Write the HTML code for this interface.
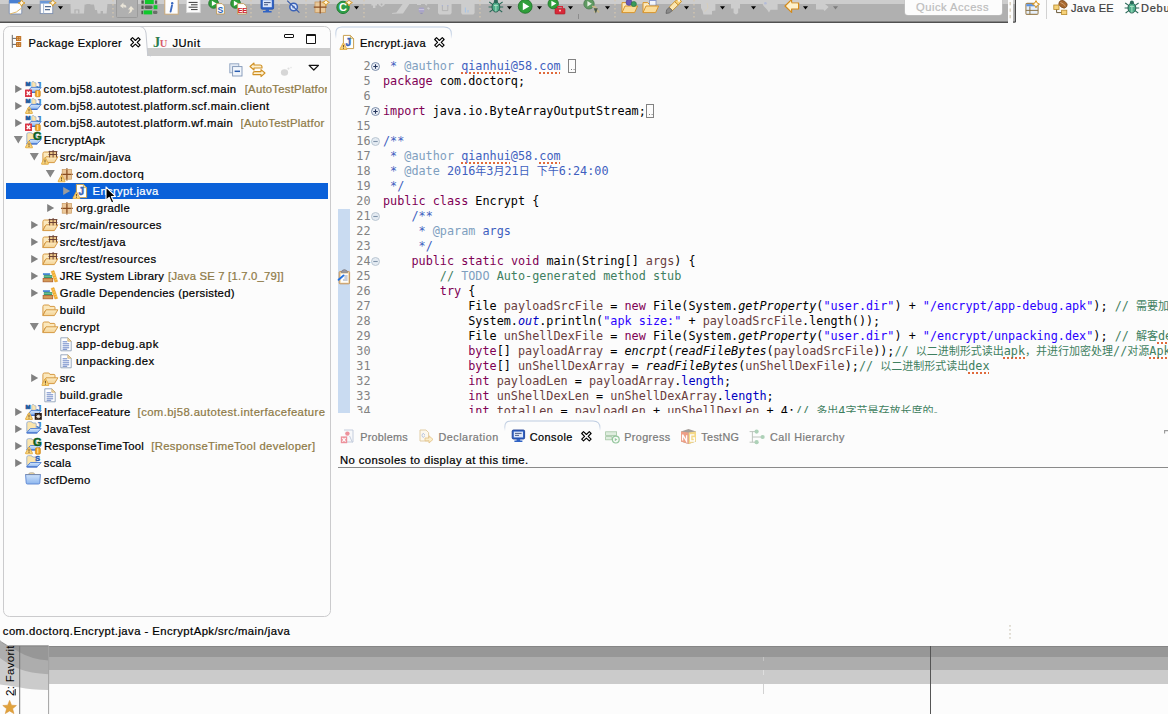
<!DOCTYPE html>
<html><head><meta charset="utf-8"><title>Eclipse</title>
<style>
*{box-sizing:border-box;margin:0;padding:0}
html,body{width:1168px;height:714px;overflow:hidden;background:#fcfcfc}
body{position:relative;font-family:"Liberation Sans","Noto Sans CJK SC",sans-serif;font-size:12.2px;color:#000}
.abs{position:absolute}
svg{position:absolute;overflow:visible}
#toolbar{left:0;top:0;width:1007.8px;height:21px;background:#b0b0b0;border-top:4px solid #cdcdcd}
#tbline{left:0;top:20.8px;width:1007.8px;height:2.2px;background:linear-gradient(#9c9c9c,#6e6e6e 45%,#505050 60%,#505050)}
#left{left:3px;top:26px;width:328.1px;height:591px;border:1.1px solid #cbcbcd;border-radius:6.5px;background:#fcfcfc}
#ltabgray{left:147px;top:48px;width:183px;height:8px;background:#cccccc}
.code{position:absolute;left:49px;white-space:pre;font-family:"DejaVu Sans Mono","Liberation Mono","Noto Sans CJK SC",monospace;font-size:11.8px;line-height:15px;height:15px}
.ln{position:absolute;width:33px;text-align:right;left:3.5px;font-family:"DejaVu Sans Mono","Liberation Mono",monospace;font-size:11.8px;line-height:15px;height:15px;color:#828282}
.kw{color:#7f0055}.cm{color:#3f7f5f}.jd{color:#3f5fbf}.tag{color:#7f9fbf}.st{color:#2a00ff}.fld{color:#0000c0}.it{font-style:italic}.lv{color:#6a3e3e}.todo{color:#7f9fbf}
.sq{text-decoration:underline;text-decoration-style:dotted;text-decoration-color:#e06a3c;text-decoration-thickness:1.5px;text-underline-offset:2px}
.tab{position:absolute;font-size:12px;white-space:nowrap;line-height:16px;-webkit-text-stroke:0.22px currentColor}
.cj{font-size:11px}
.box{display:inline-block;position:relative;width:8px;height:14px;border:1.1px solid #828282;vertical-align:-3.4px;margin-left:0.6px}
.box:after{content:'';position:absolute;left:1.3px;bottom:2.2px;width:1.1px;height:1.1px;background:#777;box-shadow:2.6px 0 0 #777}
</style></head><body>
<div id="toolbar" class="abs"></div><div id="tbline" class="abs"></div>
<div id="left" class="abs"></div><div id="ltabgray" class="abs"></div>
<svg style="left:15px;top:85px" width="8" height="8"><path d="M0.2 -0.1 L7.2 3.9 L0.2 7.9 Z" fill="#808080"/></svg>
<svg style="left:25px;top:81px" width="16" height="16" viewBox="0 0 16 16"><defs><linearGradient id="bf" x1="0" y1="0" x2="0" y2="1"><stop offset="0" stop-color="#d6e6fb"/><stop offset="1" stop-color="#8fb8f0"/></linearGradient></defs><path d="M6.8 7 L6.8 1.4 Q6.8 0.6 7.6 0.6 L8.8 0.6 L9.6 1.8 L11 1.8 L11 7 Z" fill="#fbe5ac" stroke="#9aaecc" stroke-width="0.7" stroke-linejoin="round"/><path d="M2.6 11.2 L6 6.4 L16.2 6.4 L12.4 11.2 Z" fill="url(#bf)" stroke="#4f7fd2" stroke-width="0.9" stroke-linejoin="round"/><path d="M2.8 11.4 L12.4 11.4" stroke="#3f6cc8" stroke-width="1.1"/><text x="0.6" y="4.9" font-family="Liberation Sans,sans-serif" font-size="6" font-weight="bold" fill="#1d5b9e" stroke="#1d5b9e" stroke-width="0.6">M</text><text x="11" y="7.2" font-family="Liberation Sans,sans-serif" font-size="9.6" font-weight="bold" fill="#3d7fc2" stroke="#3d7fc2" stroke-width="0.2">J</text><g transform="translate(0 8.4)"><rect x="0" y="0" width="7" height="7.6" rx="0.6" fill="#d93545"/><path d="M1.8 2 L5.2 5.6 M5.2 2 L1.8 5.6" stroke="#fff" stroke-width="1.5" fill="none"/></g><g transform="translate(10.3 8.8)"><rect x="0" y="0.6" width="5" height="6.4" rx="1.2" fill="#f3a21f" stroke="#c47c12" stroke-width="0.6"/><rect x="1.6" y="1.2" width="1.4" height="5" fill="#fbd58a"/></g></svg>
<div class="tab" style="left:43.60px;top:80.77px;font-size:11.3px;letter-spacing:0.419px;color:#000;">com.bj58.autotest.platform.scf.main</div>
<div class="abs" style="left:244.7px;top:81px;width:82.80000000000001px;height:17px;overflow:hidden"><div class="tab" style="left:0.00px;top:-0.23px;font-size:11.3px;letter-spacing:0.259px;color:#8e7a47;">[AutoTestPlatfor</div></div>
<svg style="left:15px;top:102px" width="8" height="8"><path d="M0.2 -0.1 L7.2 3.9 L0.2 7.9 Z" fill="#808080"/></svg>
<svg style="left:25px;top:98px" width="16" height="16" viewBox="0 0 16 16"><defs><linearGradient id="bf" x1="0" y1="0" x2="0" y2="1"><stop offset="0" stop-color="#d6e6fb"/><stop offset="1" stop-color="#8fb8f0"/></linearGradient></defs><path d="M6.8 7 L6.8 1.4 Q6.8 0.6 7.6 0.6 L8.8 0.6 L9.6 1.8 L11 1.8 L11 7 Z" fill="#fbe5ac" stroke="#9aaecc" stroke-width="0.7" stroke-linejoin="round"/><path d="M2.6 11.2 L6 6.4 L16.2 6.4 L12.4 11.2 Z" fill="url(#bf)" stroke="#4f7fd2" stroke-width="0.9" stroke-linejoin="round"/><path d="M2.8 11.4 L12.4 11.4" stroke="#3f6cc8" stroke-width="1.1"/><text x="0.6" y="4.9" font-family="Liberation Sans,sans-serif" font-size="6" font-weight="bold" fill="#1d5b9e" stroke="#1d5b9e" stroke-width="0.6">M</text><text x="11" y="7.2" font-family="Liberation Sans,sans-serif" font-size="9.6" font-weight="bold" fill="#3d7fc2" stroke="#3d7fc2" stroke-width="0.2">J</text><g transform="translate(0 8.2) scale(1.0)"><path d="M4 1.3 L6.9 6.7 L1.1 6.7 Z" fill="#f7d47c" stroke="#e2ac48" stroke-width="2" stroke-linejoin="round"/><path d="M4 1.3 L6.9 6.7 L1.1 6.7 Z" fill="#f8d884" stroke="#f3c968" stroke-width="0.6" stroke-linejoin="round"/><rect x="3.55" y="2.6" width="0.9" height="2.4" fill="#6a4420"/><rect x="3.55" y="5.5" width="0.9" height="0.9" fill="#6a4420"/></g></svg>
<div class="tab" style="left:43.60px;top:97.77px;font-size:11.3px;letter-spacing:0.430px;color:#000;">com.bj58.autotest.platform.scf.main.client</div>
<svg style="left:15px;top:119px" width="8" height="8"><path d="M0.2 -0.1 L7.2 3.9 L0.2 7.9 Z" fill="#808080"/></svg>
<svg style="left:25px;top:115px" width="16" height="16" viewBox="0 0 16 16"><defs><linearGradient id="bf" x1="0" y1="0" x2="0" y2="1"><stop offset="0" stop-color="#d6e6fb"/><stop offset="1" stop-color="#8fb8f0"/></linearGradient></defs><path d="M6.8 7 L6.8 1.4 Q6.8 0.6 7.6 0.6 L8.8 0.6 L9.6 1.8 L11 1.8 L11 7 Z" fill="#fbe5ac" stroke="#9aaecc" stroke-width="0.7" stroke-linejoin="round"/><path d="M2.6 11.2 L6 6.4 L16.2 6.4 L12.4 11.2 Z" fill="url(#bf)" stroke="#4f7fd2" stroke-width="0.9" stroke-linejoin="round"/><path d="M2.8 11.4 L12.4 11.4" stroke="#3f6cc8" stroke-width="1.1"/><text x="0.6" y="4.9" font-family="Liberation Sans,sans-serif" font-size="6" font-weight="bold" fill="#1d5b9e" stroke="#1d5b9e" stroke-width="0.6">M</text><text x="11" y="7.2" font-family="Liberation Sans,sans-serif" font-size="9.6" font-weight="bold" fill="#3d7fc2" stroke="#3d7fc2" stroke-width="0.2">J</text><g transform="translate(0 8.4)"><rect x="0" y="0" width="7" height="7.6" rx="0.6" fill="#d93545"/><path d="M1.8 2 L5.2 5.6 M5.2 2 L1.8 5.6" stroke="#fff" stroke-width="1.5" fill="none"/></g><g transform="translate(10.3 8.8)"><rect x="0" y="0.6" width="5" height="6.4" rx="1.2" fill="#f3a21f" stroke="#c47c12" stroke-width="0.6"/><rect x="1.6" y="1.2" width="1.4" height="5" fill="#fbd58a"/></g></svg>
<div class="tab" style="left:43.60px;top:114.77px;font-size:11.3px;letter-spacing:0.426px;color:#000;">com.bj58.autotest.platform.wf.main</div>
<div class="abs" style="left:240.6px;top:115px;width:86.9px;height:17px;overflow:hidden"><div class="tab" style="left:0.00px;top:-0.23px;font-size:11.3px;letter-spacing:0.259px;color:#8e7a47;">[AutoTestPlatfor</div></div>
<svg style="left:14px;top:136px" width="9" height="8"><path d="M-0.2 0 L8.8 0 L4.3 7.4 Z" fill="#868686"/></svg>
<svg style="left:25px;top:132px" width="16" height="16" viewBox="0 0 16 16"><defs><linearGradient id="bf" x1="0" y1="0" x2="0" y2="1"><stop offset="0" stop-color="#d6e6fb"/><stop offset="1" stop-color="#8fb8f0"/></linearGradient></defs><path d="M1.8 10.6 L1.8 2.2 Q1.8 0.7 3.4 0.7 L5.8 0.7 Q7.2 0.7 7.8 2 L10.4 2 Q11.2 2 11.2 3 L11.2 8 L5 8.4 Z" fill="#fbe5ac" stroke="#8ca6cc" stroke-width="0.8" stroke-linejoin="round"/><path d="M1.6 11.8 L5.4 7.5 L16.2 7.5 L12.2 11.8 Z" fill="url(#bf)" stroke="#4f7fd2" stroke-width="0.9" stroke-linejoin="round"/><path d="M1.8 12 L12.2 12" stroke="#3f6cc8" stroke-width="1.1"/><text x="8" y="8.3" font-family="Liberation Sans,sans-serif" font-size="11.4" font-weight="bold" fill="#0b5f1e" stroke="#0b5f1e" stroke-width="0.45">G</text><g transform="translate(0 8.6) scale(1.0)"><path d="M4 1.3 L6.9 6.7 L1.1 6.7 Z" fill="#f7d47c" stroke="#e2ac48" stroke-width="2" stroke-linejoin="round"/><path d="M4 1.3 L6.9 6.7 L1.1 6.7 Z" fill="#f8d884" stroke="#f3c968" stroke-width="0.6" stroke-linejoin="round"/><rect x="3.55" y="2.6" width="0.9" height="2.4" fill="#6a4420"/><rect x="3.55" y="5.5" width="0.9" height="0.9" fill="#6a4420"/></g></svg>
<div class="tab" style="left:43.80px;top:131.77px;font-size:11.3px;letter-spacing:0.380px;color:#000;">EncryptApk</div>
<svg style="left:30px;top:153px" width="9" height="8"><path d="M-0.2 0 L8.8 0 L4.3 7.4 Z" fill="#868686"/></svg>
<svg style="left:41px;top:149px" width="16" height="16" viewBox="0 0 16 16"><defs><linearGradient id="yf" x1="0" y1="0" x2="0" y2="1"><stop offset="0" stop-color="#fcecc4"/><stop offset="1" stop-color="#f3d294"/></linearGradient></defs><path d="M1.9 13.4 L1.9 4.6 Q1.9 3 3.4 3 L7.4 3 Q8.5 3 8.9 4.4 L13 4.4 Q14 4.4 14 5.6 L14 8.4 L4 9 Z" fill="#fbe8bd" stroke="#d69a44" stroke-width="1" stroke-linejoin="round"/><path d="M1.9 13.6 L5 7.8 L16.9 7.8 L13.4 13.6 Z" fill="url(#yf)" stroke="#d69a44" stroke-width="1" stroke-linejoin="round"/><rect x="8.6" y="2.6" width="7" height="5.8" fill="#f1cd8c"/><path d="M7.6 2.6 H16.4 M7.6 5.5 H16.4 M8.6 1.8 V8.4 M12.1 1 V8.4 M15.5 2.6 V8.4" stroke="#6e4434" stroke-width="1" fill="none"/><g transform="translate(0 8) scale(1.0)"><path d="M4 1.3 L6.9 6.7 L1.1 6.7 Z" fill="#f7d47c" stroke="#e2ac48" stroke-width="2" stroke-linejoin="round"/><path d="M4 1.3 L6.9 6.7 L1.1 6.7 Z" fill="#f8d884" stroke="#f3c968" stroke-width="0.6" stroke-linejoin="round"/><rect x="3.55" y="2.6" width="0.9" height="2.4" fill="#6a4420"/><rect x="3.55" y="5.5" width="0.9" height="0.9" fill="#6a4420"/></g></svg>
<div class="tab" style="left:59.70px;top:148.77px;font-size:11.3px;letter-spacing:0.386px;color:#000;">src/main/java</div>
<svg style="left:46px;top:170px" width="9" height="8"><path d="M-0.2 0 L8.8 0 L4.3 7.4 Z" fill="#868686"/></svg>
<svg style="left:57px;top:166px" width="16" height="16" viewBox="0 0 16 16"><rect x="5.199999999999999" y="3.4" width="9.4" height="9.8" fill="#ecc89a"/><path d="M9.899999999999999 2.1999999999999997 L9.899999999999999 14.4 M3.9999999999999996 8.3 L15.799999999999999 8.3" stroke="#8a4e22" stroke-width="1.3" fill="none"/><rect x="5.199999999999999" y="3.4" width="9.4" height="9.8" fill="none" stroke="#c99a62" stroke-width="0.7"/><g transform="translate(0.6 8.6) scale(1.0)"><path d="M4 1.3 L6.9 6.7 L1.1 6.7 Z" fill="#f7d47c" stroke="#e2ac48" stroke-width="2" stroke-linejoin="round"/><path d="M4 1.3 L6.9 6.7 L1.1 6.7 Z" fill="#f8d884" stroke="#f3c968" stroke-width="0.6" stroke-linejoin="round"/><rect x="3.55" y="2.6" width="0.9" height="2.4" fill="#6a4420"/><rect x="3.55" y="5.5" width="0.9" height="0.9" fill="#6a4420"/></g></svg>
<div class="tab" style="left:76.20px;top:165.77px;font-size:11.3px;letter-spacing:0.542px;color:#000;">com.doctorq</div>
<div class="abs" style="left:6px;top:183px;width:321.6px;height:15.8px;background:#0b61d9"></div>
<svg style="left:63px;top:187px" width="8" height="8"><path d="M0.2 -0.1 L7.2 3.9 L0.2 7.9 Z" fill="#9c9c9c"/></svg>
<svg style="left:73px;top:183px" width="16" height="16" viewBox="0 0 16 16"><path d="M3.4 1.4 L10.4 1.4 L13.6 4.6 L13.6 14.6 L3.4 14.6 Z" fill="#fff" stroke="#c9a050" stroke-width="1"/><path d="M10.4 1.4 L10.4 4.6 L13.6 4.6 Z" fill="#f3deae" stroke="#c9a050" stroke-width="0.7"/><text x="5.4" y="11.8" font-family="Liberation Sans,sans-serif" font-size="10" font-weight="bold" fill="#3a66b8" stroke="#3a66b8" stroke-width="0.45">J</text><g transform="translate(-0.6 8.4) scale(1.0)"><path d="M4 1.3 L6.9 6.7 L1.1 6.7 Z" fill="#f7d47c" stroke="#e2ac48" stroke-width="2" stroke-linejoin="round"/><path d="M4 1.3 L6.9 6.7 L1.1 6.7 Z" fill="#f8d884" stroke="#f3c968" stroke-width="0.6" stroke-linejoin="round"/><rect x="3.55" y="2.6" width="0.9" height="2.4" fill="#6a4420"/><rect x="3.55" y="5.5" width="0.9" height="0.9" fill="#6a4420"/></g></svg>
<div class="tab" style="left:92.60px;top:182.77px;font-size:11.3px;letter-spacing:0.311px;color:#fff;">Encrypt.java</div>
<svg style="left:47px;top:204px" width="8" height="8"><path d="M0.2 -0.1 L7.2 3.9 L0.2 7.9 Z" fill="#808080"/></svg>
<svg style="left:57px;top:200px" width="16" height="16" viewBox="0 0 16 16"><rect x="5.199999999999999" y="3.4" width="9.4" height="9.8" fill="#ecc89a"/><path d="M9.899999999999999 2.1999999999999997 L9.899999999999999 14.4 M3.9999999999999996 8.3 L15.799999999999999 8.3" stroke="#8a4e22" stroke-width="1.3" fill="none"/><rect x="5.199999999999999" y="3.4" width="9.4" height="9.8" fill="none" stroke="#c99a62" stroke-width="0.7"/></svg>
<div class="tab" style="left:76.20px;top:199.77px;font-size:11.3px;letter-spacing:0.291px;color:#000;">org.gradle</div>
<svg style="left:31px;top:221px" width="8" height="8"><path d="M0.2 -0.1 L7.2 3.9 L0.2 7.9 Z" fill="#808080"/></svg>
<svg style="left:41px;top:217px" width="16" height="16" viewBox="0 0 16 16"><defs><linearGradient id="yf" x1="0" y1="0" x2="0" y2="1"><stop offset="0" stop-color="#fcecc4"/><stop offset="1" stop-color="#f3d294"/></linearGradient></defs><path d="M1.9 13.4 L1.9 4.6 Q1.9 3 3.4 3 L7.4 3 Q8.5 3 8.9 4.4 L13 4.4 Q14 4.4 14 5.6 L14 8.4 L4 9 Z" fill="#fbe8bd" stroke="#d69a44" stroke-width="1" stroke-linejoin="round"/><path d="M1.9 13.6 L5 7.8 L16.9 7.8 L13.4 13.6 Z" fill="url(#yf)" stroke="#d69a44" stroke-width="1" stroke-linejoin="round"/><rect x="8.6" y="2.6" width="7" height="5.8" fill="#f1cd8c"/><path d="M7.6 2.6 H16.4 M7.6 5.5 H16.4 M8.6 1.8 V8.4 M12.1 1 V8.4 M15.5 2.6 V8.4" stroke="#6e4434" stroke-width="1" fill="none"/></svg>
<div class="tab" style="left:59.70px;top:216.77px;font-size:11.3px;letter-spacing:0.373px;color:#000;">src/main/resources</div>
<svg style="left:31px;top:238px" width="8" height="8"><path d="M0.2 -0.1 L7.2 3.9 L0.2 7.9 Z" fill="#808080"/></svg>
<svg style="left:41px;top:234px" width="16" height="16" viewBox="0 0 16 16"><defs><linearGradient id="yf" x1="0" y1="0" x2="0" y2="1"><stop offset="0" stop-color="#fcecc4"/><stop offset="1" stop-color="#f3d294"/></linearGradient></defs><path d="M1.9 13.4 L1.9 4.6 Q1.9 3 3.4 3 L7.4 3 Q8.5 3 8.9 4.4 L13 4.4 Q14 4.4 14 5.6 L14 8.4 L4 9 Z" fill="#fbe8bd" stroke="#d69a44" stroke-width="1" stroke-linejoin="round"/><path d="M1.9 13.6 L5 7.8 L16.9 7.8 L13.4 13.6 Z" fill="url(#yf)" stroke="#d69a44" stroke-width="1" stroke-linejoin="round"/><rect x="8.6" y="2.6" width="7" height="5.8" fill="#f1cd8c"/><path d="M7.6 2.6 H16.4 M7.6 5.5 H16.4 M8.6 1.8 V8.4 M12.1 1 V8.4 M15.5 2.6 V8.4" stroke="#6e4434" stroke-width="1" fill="none"/></svg>
<div class="tab" style="left:59.70px;top:233.77px;font-size:11.3px;letter-spacing:0.468px;color:#000;">src/test/java</div>
<svg style="left:31px;top:255px" width="8" height="8"><path d="M0.2 -0.1 L7.2 3.9 L0.2 7.9 Z" fill="#808080"/></svg>
<svg style="left:41px;top:251px" width="16" height="16" viewBox="0 0 16 16"><defs><linearGradient id="yf" x1="0" y1="0" x2="0" y2="1"><stop offset="0" stop-color="#fcecc4"/><stop offset="1" stop-color="#f3d294"/></linearGradient></defs><path d="M1.9 13.4 L1.9 4.6 Q1.9 3 3.4 3 L7.4 3 Q8.5 3 8.9 4.4 L13 4.4 Q14 4.4 14 5.6 L14 8.4 L4 9 Z" fill="#fbe8bd" stroke="#d69a44" stroke-width="1" stroke-linejoin="round"/><path d="M1.9 13.6 L5 7.8 L16.9 7.8 L13.4 13.6 Z" fill="url(#yf)" stroke="#d69a44" stroke-width="1" stroke-linejoin="round"/><rect x="8.6" y="2.6" width="7" height="5.8" fill="#f1cd8c"/><path d="M7.6 2.6 H16.4 M7.6 5.5 H16.4 M8.6 1.8 V8.4 M12.1 1 V8.4 M15.5 2.6 V8.4" stroke="#6e4434" stroke-width="1" fill="none"/></svg>
<div class="tab" style="left:59.70px;top:250.77px;font-size:11.3px;letter-spacing:0.431px;color:#000;">src/test/resources</div>
<svg style="left:31px;top:272px" width="8" height="8"><path d="M0.2 -0.1 L7.2 3.9 L0.2 7.9 Z" fill="#808080"/></svg>
<svg style="left:41px;top:268px" width="16" height="16" viewBox="0 0 16 16"><rect x="1.8" y="4.9" width="7.4" height="2.2" rx="1" fill="#3f7fcc"/><rect x="2.4" y="5.3" width="6.4" height="0.8" fill="#7fb0e6"/><rect x="2.8" y="7.1" width="8.4" height="3" fill="#3c9a6c"/><rect x="3.2" y="8" width="7.6" height="0.9" fill="#6fc096"/><rect x="2.1" y="10.4" width="9.6" height="3.4" fill="#d39a56" stroke="#ad5f2c" stroke-width="0.8"/><path d="M10.2 3.4 L13 2.6 L16.6 13.4 L13.9 14 Z" fill="#f3ad2c" stroke="#e39a22" stroke-width="0.5"/><path d="M11.4 5 L13.4 4.4 M12.2 7.4 L14.2 6.8 M13 9.8 L15 9.2 M13.8 12 L15.8 11.4" stroke="#fbd478" stroke-width="0.8"/></svg>
<div class="tab" style="left:59.80px;top:267.77px;font-size:11.3px;letter-spacing:0.250px;color:#000;">JRE System Library</div>
<div class="tab" style="left:168.10px;top:267.77px;font-size:11.3px;letter-spacing:0.205px;color:#8e7a47;">[Java SE 7 [1.7.0_79]]</div>
<svg style="left:31px;top:289px" width="8" height="8"><path d="M0.2 -0.1 L7.2 3.9 L0.2 7.9 Z" fill="#808080"/></svg>
<svg style="left:41px;top:285px" width="16" height="16" viewBox="0 0 16 16"><rect x="1.8" y="4.9" width="7.4" height="2.2" rx="1" fill="#3f7fcc"/><rect x="2.4" y="5.3" width="6.4" height="0.8" fill="#7fb0e6"/><rect x="2.8" y="7.1" width="8.4" height="3" fill="#3c9a6c"/><rect x="3.2" y="8" width="7.6" height="0.9" fill="#6fc096"/><rect x="2.1" y="10.4" width="9.6" height="3.4" fill="#d39a56" stroke="#ad5f2c" stroke-width="0.8"/><path d="M10.2 3.4 L13 2.6 L16.6 13.4 L13.9 14 Z" fill="#f3ad2c" stroke="#e39a22" stroke-width="0.5"/><path d="M11.4 5 L13.4 4.4 M12.2 7.4 L14.2 6.8 M13 9.8 L15 9.2 M13.8 12 L15.8 11.4" stroke="#fbd478" stroke-width="0.8"/></svg>
<div class="tab" style="left:59.80px;top:284.77px;font-size:11.3px;letter-spacing:0.299px;color:#000;">Gradle Dependencies (persisted)</div>
<svg style="left:41px;top:302px" width="16" height="16" viewBox="0 0 16 16"><defs><linearGradient id="yf" x1="0" y1="0" x2="0" y2="1"><stop offset="0" stop-color="#fcecc4"/><stop offset="1" stop-color="#f3d294"/></linearGradient></defs><path d="M1.9 13.4 L1.9 4.6 Q1.9 3 3.4 3 L7.4 3 Q8.5 3 8.9 4.4 L13 4.4 Q14 4.4 14 5.6 L14 8.4 L4 9 Z" fill="#fbe8bd" stroke="#d69a44" stroke-width="1" stroke-linejoin="round"/><path d="M1.9 13.6 L5 7.8 L16.9 7.8 L13.4 13.6 Z" fill="url(#yf)" stroke="#d69a44" stroke-width="1" stroke-linejoin="round"/></svg>
<div class="tab" style="left:59.80px;top:301.77px;font-size:11.3px;letter-spacing:0.356px;color:#000;">build</div>
<svg style="left:30px;top:323px" width="9" height="8"><path d="M-0.2 0 L8.8 0 L4.3 7.4 Z" fill="#868686"/></svg>
<svg style="left:41px;top:319px" width="16" height="16" viewBox="0 0 16 16"><defs><linearGradient id="yf" x1="0" y1="0" x2="0" y2="1"><stop offset="0" stop-color="#fcecc4"/><stop offset="1" stop-color="#f3d294"/></linearGradient></defs><path d="M1.9 13.4 L1.9 4.6 Q1.9 3 3.4 3 L7.4 3 Q8.5 3 8.9 4.4 L13 4.4 Q14 4.4 14 5.6 L14 8.4 L4 9 Z" fill="#fbe8bd" stroke="#d69a44" stroke-width="1" stroke-linejoin="round"/><path d="M1.9 13.6 L5 7.8 L16.9 7.8 L13.4 13.6 Z" fill="url(#yf)" stroke="#d69a44" stroke-width="1" stroke-linejoin="round"/></svg>
<div class="tab" style="left:59.80px;top:318.77px;font-size:11.3px;letter-spacing:0.424px;color:#000;">encrypt</div>
<svg style="left:57px;top:336px" width="16" height="16" viewBox="0 0 16 16"><g transform="translate(1.2 0.3)"><path d="M2.6 1.5 L9.6 1.5 L13 4.9 L13 14.5 L2.6 14.5 Z" fill="#fff" stroke="#8fa0b8" stroke-width="0.9"/><path d="M9.6 1.5 L9.6 4.9 L13 4.9 Z" fill="#f0d9a8" stroke="#c8a868" stroke-width="0.7"/><path d="M4.4 5.5 H9 M4.4 7.5 H11 M4.4 9.5 H11 M4.4 11.5 H11 M4.4 13 H9" stroke="#5a78c0" stroke-width="0.9"/></g></svg>
<div class="tab" style="left:76.00px;top:335.77px;font-size:11.3px;letter-spacing:0.575px;color:#000;">app-debug.apk</div>
<svg style="left:57px;top:353px" width="16" height="16" viewBox="0 0 16 16"><g transform="translate(1.2 0.3)"><path d="M2.6 1.5 L9.6 1.5 L13 4.9 L13 14.5 L2.6 14.5 Z" fill="#fff" stroke="#8fa0b8" stroke-width="0.9"/><path d="M9.6 1.5 L9.6 4.9 L13 4.9 Z" fill="#f0d9a8" stroke="#c8a868" stroke-width="0.7"/><path d="M4.4 5.5 H9 M4.4 7.5 H11 M4.4 9.5 H11 M4.4 11.5 H11 M4.4 13 H9" stroke="#5a78c0" stroke-width="0.9"/></g></svg>
<div class="tab" style="left:76.00px;top:352.77px;font-size:11.3px;letter-spacing:0.435px;color:#000;">unpacking.dex</div>
<svg style="left:31px;top:374px" width="8" height="8"><path d="M0.2 -0.1 L7.2 3.9 L0.2 7.9 Z" fill="#808080"/></svg>
<svg style="left:41px;top:370px" width="16" height="16" viewBox="0 0 16 16"><defs><linearGradient id="yf" x1="0" y1="0" x2="0" y2="1"><stop offset="0" stop-color="#fcecc4"/><stop offset="1" stop-color="#f3d294"/></linearGradient></defs><path d="M1.9 13.4 L1.9 4.6 Q1.9 3 3.4 3 L7.4 3 Q8.5 3 8.9 4.4 L13 4.4 Q14 4.4 14 5.6 L14 8.4 L4 9 Z" fill="#fbe8bd" stroke="#d69a44" stroke-width="1" stroke-linejoin="round"/><path d="M1.9 13.6 L5 7.8 L16.9 7.8 L13.4 13.6 Z" fill="url(#yf)" stroke="#d69a44" stroke-width="1" stroke-linejoin="round"/><g transform="translate(0.4 8.2) scale(1.0)"><path d="M4 1.3 L6.9 6.7 L1.1 6.7 Z" fill="#f7d47c" stroke="#e2ac48" stroke-width="2" stroke-linejoin="round"/><path d="M4 1.3 L6.9 6.7 L1.1 6.7 Z" fill="#f8d884" stroke="#f3c968" stroke-width="0.6" stroke-linejoin="round"/><rect x="3.55" y="2.6" width="0.9" height="2.4" fill="#6a4420"/><rect x="3.55" y="5.5" width="0.9" height="0.9" fill="#6a4420"/></g></svg>
<div class="tab" style="left:59.70px;top:369.77px;font-size:11.3px;letter-spacing:0.068px;color:#000;">src</div>
<svg style="left:41px;top:387px" width="16" height="16" viewBox="0 0 16 16"><g transform="translate(1.2 0.3)"><path d="M2.6 1.5 L9.6 1.5 L13 4.9 L13 14.5 L2.6 14.5 Z" fill="#fff" stroke="#8fa0b8" stroke-width="0.9"/><path d="M9.6 1.5 L9.6 4.9 L13 4.9 Z" fill="#f0d9a8" stroke="#c8a868" stroke-width="0.7"/><path d="M4.4 5.5 H9 M4.4 7.5 H11 M4.4 9.5 H11 M4.4 11.5 H11 M4.4 13 H9" stroke="#5a78c0" stroke-width="0.9"/></g></svg>
<div class="tab" style="left:59.80px;top:386.77px;font-size:11.3px;letter-spacing:0.388px;color:#000;">build.gradle</div>
<svg style="left:15px;top:408px" width="8" height="8"><path d="M0.2 -0.1 L7.2 3.9 L0.2 7.9 Z" fill="#808080"/></svg>
<svg style="left:25px;top:404px" width="16" height="16" viewBox="0 0 16 16"><defs><linearGradient id="bf" x1="0" y1="0" x2="0" y2="1"><stop offset="0" stop-color="#d6e6fb"/><stop offset="1" stop-color="#8fb8f0"/></linearGradient></defs><path d="M6.8 7 L6.8 1.4 Q6.8 0.6 7.6 0.6 L8.8 0.6 L9.6 1.8 L11 1.8 L11 7 Z" fill="#fbe5ac" stroke="#9aaecc" stroke-width="0.7" stroke-linejoin="round"/><path d="M2.6 11.2 L6 6.4 L16.2 6.4 L12.4 11.2 Z" fill="url(#bf)" stroke="#4f7fd2" stroke-width="0.9" stroke-linejoin="round"/><path d="M2.8 11.4 L12.4 11.4" stroke="#3f6cc8" stroke-width="1.1"/><text x="0.6" y="4.9" font-family="Liberation Sans,sans-serif" font-size="6" font-weight="bold" fill="#1d5b9e" stroke="#1d5b9e" stroke-width="0.6">M</text><text x="11" y="7.2" font-family="Liberation Sans,sans-serif" font-size="9.6" font-weight="bold" fill="#3d7fc2" stroke="#3d7fc2" stroke-width="0.2">J</text><g transform="translate(0 8.2) scale(1.0)"><path d="M4 1.3 L6.9 6.7 L1.1 6.7 Z" fill="#f7d47c" stroke="#e2ac48" stroke-width="2" stroke-linejoin="round"/><path d="M4 1.3 L6.9 6.7 L1.1 6.7 Z" fill="#f8d884" stroke="#f3c968" stroke-width="0.6" stroke-linejoin="round"/><rect x="3.55" y="2.6" width="0.9" height="2.4" fill="#6a4420"/><rect x="3.55" y="5.5" width="0.9" height="0.9" fill="#6a4420"/></g><rect x="9.7" y="9" width="7.1" height="6.8" fill="#2b1b12"/><path d="M11 12.4 H15.6 M13.3 10.4 V14.4 M11.6 10.8 L15 14 M15 10.8 L11.6 14" stroke="#e8e0d8" stroke-width="0.8"/><circle cx="13.3" cy="12.4" r="1.2" fill="#f4ece0"/></svg>
<div class="tab" style="left:43.90px;top:403.77px;font-size:11.3px;letter-spacing:0.232px;color:#000;">InterfaceFeature</div>
<div class="tab" style="left:137.60px;top:403.77px;font-size:11.3px;letter-spacing:0.394px;color:#8e7a47;">[com.bj58.autotest.interfacefeature</div>
<svg style="left:15px;top:425px" width="8" height="8"><path d="M0.2 -0.1 L7.2 3.9 L0.2 7.9 Z" fill="#808080"/></svg>
<svg style="left:25px;top:421px" width="16" height="16" viewBox="0 0 16 16"><defs><linearGradient id="bf" x1="0" y1="0" x2="0" y2="1"><stop offset="0" stop-color="#d6e6fb"/><stop offset="1" stop-color="#8fb8f0"/></linearGradient></defs><path d="M1.8 10.6 L1.8 2.2 Q1.8 0.7 3.4 0.7 L5.8 0.7 Q7.2 0.7 7.8 2 L10.4 2 Q11.2 2 11.2 3 L11.2 8 L5 8.4 Z" fill="#fbe5ac" stroke="#8ca6cc" stroke-width="0.8" stroke-linejoin="round"/><path d="M1.6 11.8 L5.4 7.5 L16.2 7.5 L12.2 11.8 Z" fill="url(#bf)" stroke="#4f7fd2" stroke-width="0.9" stroke-linejoin="round"/><path d="M1.8 12 L12.2 12" stroke="#3f6cc8" stroke-width="1.1"/><text x="11" y="7.4" font-family="Liberation Sans,sans-serif" font-size="9.6" font-weight="bold" fill="#3d7fc2" stroke="#3d7fc2" stroke-width="0.2">J</text></svg>
<div class="tab" style="left:43.80px;top:420.77px;font-size:11.3px;letter-spacing:0.229px;color:#000;">JavaTest</div>
<svg style="left:15px;top:442px" width="8" height="8"><path d="M0.2 -0.1 L7.2 3.9 L0.2 7.9 Z" fill="#808080"/></svg>
<svg style="left:25px;top:438px" width="16" height="16" viewBox="0 0 16 16"><defs><linearGradient id="bf" x1="0" y1="0" x2="0" y2="1"><stop offset="0" stop-color="#d6e6fb"/><stop offset="1" stop-color="#8fb8f0"/></linearGradient></defs><path d="M1.8 10.6 L1.8 2.2 Q1.8 0.7 3.4 0.7 L5.8 0.7 Q7.2 0.7 7.8 2 L10.4 2 Q11.2 2 11.2 3 L11.2 8 L5 8.4 Z" fill="#fbe5ac" stroke="#8ca6cc" stroke-width="0.8" stroke-linejoin="round"/><path d="M1.6 11.8 L5.4 7.5 L16.2 7.5 L12.2 11.8 Z" fill="url(#bf)" stroke="#4f7fd2" stroke-width="0.9" stroke-linejoin="round"/><path d="M1.8 12 L12.2 12" stroke="#3f6cc8" stroke-width="1.1"/><text x="8" y="8.3" font-family="Liberation Sans,sans-serif" font-size="11.4" font-weight="bold" fill="#0b5f1e" stroke="#0b5f1e" stroke-width="0.45">G</text><g transform="translate(0 8.6) scale(1.0)"><path d="M4 1.3 L6.9 6.7 L1.1 6.7 Z" fill="#f7d47c" stroke="#e2ac48" stroke-width="2" stroke-linejoin="round"/><path d="M4 1.3 L6.9 6.7 L1.1 6.7 Z" fill="#f8d884" stroke="#f3c968" stroke-width="0.6" stroke-linejoin="round"/><rect x="3.55" y="2.6" width="0.9" height="2.4" fill="#6a4420"/><rect x="3.55" y="5.5" width="0.9" height="0.9" fill="#6a4420"/></g><g transform="translate(10.4 9.2)"><rect x="0" y="0.6" width="5" height="6.4" rx="1.2" fill="#f3a21f" stroke="#c47c12" stroke-width="0.6"/><rect x="1.6" y="1.2" width="1.4" height="5" fill="#fbd58a"/></g></svg>
<div class="tab" style="left:43.90px;top:437.77px;font-size:11.3px;letter-spacing:0.246px;color:#000;">ResponseTimeTool</div>
<div class="tab" style="left:151.30px;top:437.77px;font-size:11.3px;letter-spacing:0.313px;color:#8e7a47;">[ResponseTimeTool developer]</div>
<svg style="left:15px;top:459px" width="8" height="8"><path d="M0.2 -0.1 L7.2 3.9 L0.2 7.9 Z" fill="#808080"/></svg>
<svg style="left:25px;top:455px" width="16" height="16" viewBox="0 0 16 16"><defs><linearGradient id="bf" x1="0" y1="0" x2="0" y2="1"><stop offset="0" stop-color="#d6e6fb"/><stop offset="1" stop-color="#8fb8f0"/></linearGradient></defs><path d="M1.8 10.6 L1.8 2.2 Q1.8 0.7 3.4 0.7 L5.8 0.7 Q7.2 0.7 7.8 2 L10.4 2 Q11.2 2 11.2 3 L11.2 8 L5 8.4 Z" fill="#fbe5ac" stroke="#8ca6cc" stroke-width="0.8" stroke-linejoin="round"/><path d="M1.6 11.8 L5.4 7.5 L16.2 7.5 L12.2 11.8 Z" fill="url(#bf)" stroke="#4f7fd2" stroke-width="0.9" stroke-linejoin="round"/><path d="M1.8 12 L12.2 12" stroke="#3f6cc8" stroke-width="1.1"/><text x="10.2" y="5.8" font-family="Liberation Sans,sans-serif" font-size="7.2" font-weight="bold" fill="#2a5cb2" stroke="#2a5cb2" stroke-width="0.45">S</text></svg>
<div class="tab" style="left:43.80px;top:454.77px;font-size:11.3px;letter-spacing:0.230px;color:#000;">scala</div>
<svg style="left:25px;top:472px" width="16" height="16" viewBox="0 0 16 16"><defs><linearGradient id="cf" x1="0" y1="0" x2="0" y2="1"><stop offset="0" stop-color="#cfe2fa"/><stop offset="1" stop-color="#8db6ee"/></linearGradient></defs><path d="M3.4 2.8 Q3.6 0.8 5.4 0.8 L8 0.8 Q9.6 0.8 9.8 2.8" fill="#f1d9a4" stroke="#a8a090" stroke-width="0.7"/><path d="M0.6 2.6 L15.4 2.6 L14.8 11 Q14.7 12 13.6 12 L2.4 12 Q1.3 12 1.2 11 Z" fill="url(#cf)" stroke="#5a84d0" stroke-width="0.9" stroke-linejoin="round"/><path d="M0.4 2.5 H15.6" stroke="#7a8aa8" stroke-width="0.9"/></svg>
<div class="tab" style="left:43.80px;top:471.77px;font-size:11.3px;letter-spacing:0.320px;color:#000;">scfDemo</div>
<svg style="left:105.4px;top:185.6px" width="13" height="19" viewBox="0 0 13 19"><path d="M1 1 L1 14.2 L4.2 11.4 L6.6 17 L8.8 16 L6.4 10.6 L10.6 10.4 Z" fill="#000" stroke="#fff" stroke-width="1.1" stroke-linejoin="round"/></svg>
<div class="abs" id="edclip" style="left:334px;top:56px;width:834px;height:356.6px;overflow:hidden">
<div class="abs" style="left:4.2px;top:153px;width:11.7px;height:206px;background:#c9dbf1"></div>
<svg style="left:4px;top:212.6px" width="13" height="16" viewBox="0 0 13 16"><rect x="1.2" y="2.6" width="10.4" height="12.2" rx="0.8" fill="#f1d7a8" stroke="#c4935a" stroke-width="1"/><rect x="2.8" y="4.6" width="7.4" height="9" fill="#fdfdfd"/><path d="M4 1.6 Q6.4 -0.4 8.8 1.6 L9.6 3.6 H3.2 Z" fill="#9a9aa2" stroke="#77777f" stroke-width="0.6"/><path d="M6.4 7 H9.6 M6.4 9 H9.6 M5 11 H9.6" stroke="#8a94a8" stroke-width="0.9"/><path d="M0.6 10.8 L5.6 6.4" stroke="#1f6fe0" stroke-width="1.9" stroke-linecap="round"/></svg>
<div class="ln" style="top:3px">2</div>
<svg style="left:36.9px;top:6.1px" width="9" height="9"><circle cx="4.5" cy="4.5" r="4" fill="#e9eef6" stroke="#6f82a2" stroke-width="0.9"/><path d="M2.3 4.5 H6.7 M4.5 2.3 V6.7" stroke="#25365c" stroke-width="1.1"/></svg>
<div class="code" style="top:3px"><span class="jd"> * </span><span class="tag">@author</span> <span class="jd"><span class="sq">qianhui</span>@58.<span class="sq">com</span></span> <span class="box"></span></div>
<div class="ln" style="top:18px">5</div>
<div class="code" style="top:18px"><span class="kw">package</span> com.doctorq;</div>
<div class="ln" style="top:33px">6</div>
<div class="code" style="top:33px"></div>
<div class="ln" style="top:48px">7</div>
<svg style="left:36.9px;top:51.1px" width="9" height="9"><circle cx="4.5" cy="4.5" r="4" fill="#e9eef6" stroke="#6f82a2" stroke-width="0.9"/><path d="M2.3 4.5 H6.7 M4.5 2.3 V6.7" stroke="#25365c" stroke-width="1.1"/></svg>
<div class="code" style="top:48px"><span class="kw">import</span> java.io.ByteArrayOutputStream;<span class="box"></span></div>
<div class="ln" style="top:63px">15</div>
<div class="code" style="top:63px"></div>
<div class="ln" style="top:78px">16</div>
<svg style="left:36.9px;top:81.1px" width="9" height="9"><circle cx="4.5" cy="4.5" r="4" fill="#e4ebf2" stroke="#b6c2ce" stroke-width="0.9"/><path d="M2.3 4.5 H6.7" stroke="#8094aa" stroke-width="1.1"/></svg>
<div class="code" style="top:78px"><span class="jd">/**</span></div>
<div class="ln" style="top:93px">17</div>
<div class="code" style="top:93px"><span class="jd"> * </span><span class="tag">@author</span> <span class="jd"><span class="sq">qianhui</span>@58.<span class="sq">com</span></span></div>
<div class="ln" style="top:108px">18</div>
<div class="code" style="top:108px"><span class="jd"> * </span><span class="tag">@date</span><span class="jd"> 2016<span class="cj">年</span>3<span class="cj">月</span>21<span class="cj">日</span> <span class="cj">下午</span>6:24:00</span></div>
<div class="ln" style="top:123px">19</div>
<div class="code" style="top:123px"><span class="jd"> */</span></div>
<div class="ln" style="top:138px">20</div>
<div class="code" style="top:138px"><span class="kw">public</span> <span class="kw">class</span> Encrypt {</div>
<div class="ln" style="top:153px">21</div>
<svg style="left:36.9px;top:156.1px" width="9" height="9"><circle cx="4.5" cy="4.5" r="4" fill="#e4ebf2" stroke="#b6c2ce" stroke-width="0.9"/><path d="M2.3 4.5 H6.7" stroke="#8094aa" stroke-width="1.1"/></svg>
<div class="code" style="top:153px">    <span class="jd">/**</span></div>
<div class="ln" style="top:168px">22</div>
<div class="code" style="top:168px">    <span class="jd"> * </span><span class="tag">@param</span><span class="jd"> args</span></div>
<div class="ln" style="top:183px">23</div>
<div class="code" style="top:183px">    <span class="jd"> */</span></div>
<div class="ln" style="top:198px">24</div>
<svg style="left:36.9px;top:201.1px" width="9" height="9"><circle cx="4.5" cy="4.5" r="4" fill="#e4ebf2" stroke="#b6c2ce" stroke-width="0.9"/><path d="M2.3 4.5 H6.7" stroke="#8094aa" stroke-width="1.1"/></svg>
<div class="code" style="top:198px">    <span class="kw">public</span> <span class="kw">static</span> <span class="kw">void</span> main(String[] <span class="lv">args</span>) {</div>
<div class="ln" style="top:213px">25</div>
<div class="code" style="top:213px">        <span class="cm">// </span><span class="todo">TODO</span><span class="cm"> Auto-generated method stub</span></div>
<div class="ln" style="top:228px">26</div>
<div class="code" style="top:228px">        <span class="kw">try</span> {</div>
<div class="ln" style="top:243px">27</div>
<div class="code" style="top:243px">            File <span class="lv">payloadSrcFile</span> = <span class="kw">new</span> File(System.<span class="it">getProperty</span>(<span class="st">"user.dir"</span>) + <span class="st">"/encrypt/app-debug.apk"</span>); <span class="cm">// <span class="cj">需要加密的</span></span></div>
<div class="ln" style="top:258px">28</div>
<div class="code" style="top:258px">            System.<span class="fld it">out</span>.println(<span class="st">"apk size:"</span> + <span class="lv">payloadSrcFile</span>.length());</div>
<div class="ln" style="top:273px">29</div>
<div class="code" style="top:273px">            File <span class="lv">unShellDexFile</span> = <span class="kw">new</span> File(System.<span class="it">getProperty</span>(<span class="st">"user.dir"</span>) + <span class="st">"/encrypt/unpacking.dex"</span>); <span class="cm">// <span class="cj">解客</span><span class="sq">dex</span></span></div>
<div class="ln" style="top:288px">30</div>
<div class="code" style="top:288px">            <span class="kw">byte</span>[] <span class="lv">payloadArray</span> = <span class="it">encrpt</span>(<span class="it">readFileBytes</span>(<span class="lv">payloadSrcFile</span>));<span class="cm">// <span class="cj">以二进制形式读出</span><span class="sq">apk</span><span class="cj">，并进行加密处理</span>//<span class="cj">对源</span><span class="sq">Apk</span><span class="cj">进行</span></span></div>
<div class="ln" style="top:303px">31</div>
<div class="code" style="top:303px">            <span class="kw">byte</span>[] <span class="lv">unShellDexArray</span> = <span class="it">readFileBytes</span>(<span class="lv">unShellDexFile</span>);<span class="cm">// <span class="cj">以二进制形式读出</span><span class="sq">dex</span></span></div>
<div class="ln" style="top:318px">32</div>
<div class="code" style="top:318px">            <span class="kw">int</span> <span class="lv">payloadLen</span> = <span class="lv">payloadArray</span>.<span class="fld">length</span>;</div>
<div class="ln" style="top:333px">33</div>
<div class="code" style="top:333px">            <span class="kw">int</span> <span class="lv">unShellDexLen</span> = <span class="lv">unShellDexArray</span>.<span class="fld">length</span>;</div>
<div class="ln" style="top:348px">34</div>
<div class="code" style="top:348px">            <span class="kw">int</span> <span class="lv">totalLen</span> = <span class="lv">payloadLen</span> + <span class="lv">unShellDexLen</span> + 4;<span class="cm">// <span class="cj">多出</span>4<span class="cj">字节是存放长度的。</span></span></div>
</div>
<svg style="left:11px;top:34px" width="12" height="15" viewBox="0 0 12 15"><path d="M1.3 0.9 V13.9 M1.3 4.4 H5 M1.3 10.4 H5" stroke="#6a6a6a" stroke-width="1" fill="none"/><rect x="5" y="2" width="5.2" height="5" rx="0.6" fill="#bf7226"/><rect x="5" y="8" width="5.2" height="4.9" rx="0.6" fill="#bf7226"/><path d="M6.2 3.2 h1 v1 h-1 Z M8.2 3.2 h1 v1 h-1 Z M6.2 5 h1 v1 h-1 Z M8.2 5 h1 v1 h-1 Z M6.2 9.2 h1 v1 h-1 Z M8.2 9.2 h1 v1 h-1 Z M6.2 11 h1 v1 h-1 Z M8.2 11 h1 v1 h-1 Z" fill="#ecc088"/></svg>
<div class="tab" style="left:28.40px;top:34.93px;font-size:11.1px;letter-spacing:0.386px;color:#000;">Package Explorer</div>
<svg style="left:130.2px;top:36.6px" width="11" height="11" viewBox="0 0 11 11"><path d="M0.7 2.5 L2.5 0.7 L5.4 3.5 L8.3 0.7 L10.1 2.5 L7.2 5.3 L10.1 8.1 L8.3 9.9 L5.4 7.1 L2.5 9.9 L0.7 8.1 L3.6 5.3 Z" fill="#fdfdfd" stroke="#000" stroke-width="1.15" stroke-linejoin="round"/></svg>
<svg style="left:140px;top:26px" width="12" height="32" viewBox="0 0 12 32"><path d="M0 0.5 Q5 1 6 7 L7.5 27 Q8 30 11 30" fill="none" stroke="#c6cad2" stroke-width="1"/></svg>
<svg style="left:153px;top:36px" width="18" height="13" viewBox="0 0 18 13"><text x="0" y="11" font-family="Liberation Serif,serif" font-weight="bold" font-size="14.5" fill="#2f7d4c">J</text><text x="6.8" y="11" font-family="Liberation Serif,serif" font-weight="bold" font-size="10.5" fill="#d75a6a">U</text></svg>
<div class="tab" style="left:172.40px;top:34.93px;font-size:11.1px;letter-spacing:0.578px;color:#000;">JUnit</div>
<div class="abs" style="left:284px;top:33.8px;width:10.2px;height:4.7px;border:1.15px solid #111;border-radius:1px;background:#fff"></div>
<div class="abs" style="left:306.1px;top:33.5px;width:10.3px;height:10.6px;border:1.05px solid #151515;border-top-width:2.1px;border-radius:1px;background:#fff"></div>
<svg style="left:229px;top:63px" width="14" height="14" viewBox="0 0 14 14"><rect x="0.8" y="0.8" width="9" height="9" fill="#e4ebf5" stroke="#8fa3c0" stroke-width="0.9"/><rect x="3.6" y="3.6" width="9.4" height="9.4" fill="#f2f6fb" stroke="#7f95b6" stroke-width="0.9"/><path d="M5.6 8.3 H11" stroke="#2a5db0" stroke-width="1.5"/></svg>
<svg style="left:249px;top:62px" width="17" height="16" viewBox="0 0 17 16"><path d="M1 4.5 L5 1 L5 3 L11 3 Q13 3 13 5 L13 6 L10.6 6 L5 6 L5 8 Z" fill="#fdf1d2" stroke="#cf8f22" stroke-width="1.1" stroke-linejoin="round"/><path d="M16 11 L12 7.6 L12 9.6 L6 9.6 Q4 9.6 4 11 L4 12.6 L12 12.6 L12 14.6 Z" fill="#fdf1d2" stroke="#cf8f22" stroke-width="1.1" stroke-linejoin="round"/></svg>
<svg style="left:280px;top:66px" width="13" height="11" viewBox="0 0 13 11"><ellipse cx="4.5" cy="6.5" rx="3.6" ry="3.2" fill="#d6d6d6"/><circle cx="8.5" cy="2.6" r="1.1" fill="#e0e0e0"/><circle cx="11" cy="1.6" r="0.8" fill="#e6e6e6"/></svg>
<svg style="left:308px;top:64px" width="12" height="8" viewBox="0 0 12 8"><path d="M1.1 1.3 L10.5 1.3 L5.8 6 Z" fill="#fff" stroke="#111" stroke-width="1.2" stroke-linejoin="round"/></svg>
<svg style="left:335px;top:26px" width="120" height="14" viewBox="0 0 120 14"><defs><linearGradient id="fd" x1="0" y1="0" x2="0" y2="1"><stop offset="0" stop-color="#bccbe0"/><stop offset="0.6" stop-color="#cdd8e8"/><stop offset="1" stop-color="#cdd8e8" stop-opacity="0"/></linearGradient></defs><path d="M0.8 13 L0.8 7 Q0.8 1 7 1 L109 1 Q116.4 1 116.4 8 L116.4 13" fill="none" stroke="url(#fd)" stroke-width="1.1"/></svg>
<svg style="left:339.6px;top:34.4px" width="16" height="16" viewBox="0 0 16 16"><path d="M3.4 1.4 L10.4 1.4 L13.6 4.6 L13.6 14.6 L3.4 14.6 Z" fill="#fff" stroke="#c9a050" stroke-width="1"/><path d="M10.4 1.4 L10.4 4.6 L13.6 4.6 Z" fill="#f3deae" stroke="#c9a050" stroke-width="0.7"/><text x="5.4" y="11.8" font-family="Liberation Sans,sans-serif" font-size="10" font-weight="bold" fill="#3a66b8" stroke="#3a66b8" stroke-width="0.45">J</text><g transform="translate(-0.6 8.4) scale(1.0)"><path d="M4 1.3 L6.9 6.7 L1.1 6.7 Z" fill="#f7d47c" stroke="#e2ac48" stroke-width="2" stroke-linejoin="round"/><path d="M4 1.3 L6.9 6.7 L1.1 6.7 Z" fill="#f8d884" stroke="#f3c968" stroke-width="0.6" stroke-linejoin="round"/><rect x="3.55" y="2.6" width="0.9" height="2.4" fill="#6a4420"/><rect x="3.55" y="5.5" width="0.9" height="0.9" fill="#6a4420"/></g></svg>
<div class="tab" style="left:360.00px;top:34.93px;font-size:11.1px;letter-spacing:0.420px;color:#000;">Encrypt.java</div>
<svg style="left:433.8px;top:36.8px" width="11" height="11" viewBox="0 0 11 11"><path d="M0.7 2.5 L2.5 0.7 L5.4 3.5 L8.3 0.7 L10.1 2.5 L7.2 5.3 L10.1 8.1 L8.3 9.9 L5.4 7.1 L2.5 9.9 L0.7 8.1 L3.6 5.3 Z" fill="#fdfdfd" stroke="#000" stroke-width="1.15" stroke-linejoin="round"/></svg>
<div class="abs" style="left:338px;top:466.5px;width:830px;height:1.2px;background:#8a8a8a"></div>
<svg style="left:1163.6px;top:429.8px" width="5" height="4" viewBox="0 0 5 4"><path d="M0.6 3.4 V0.6 H5" fill="none" stroke="#9a9a9a" stroke-width="1.1"/></svg>
<svg style="left:504px;top:420px" width="100" height="12" viewBox="0 0 100 12"><path d="M0.8 11 L0.8 7 Q0.8 1 7 1 L89 1 Q96 1 96 8 L96 11" fill="none" stroke="url(#fd)" stroke-width="1.1"/></svg>
<div class="tab" style="left:360.30px;top:428.93px;font-size:10.8px;letter-spacing:0.240px;color:#7a7a7a;">Problems</div>
<div class="tab" style="left:438.40px;top:428.93px;font-size:10.8px;letter-spacing:0.527px;color:#7a7a7a;">Declaration</div>
<div class="tab" style="left:529.70px;top:428.90px;font-size:10.9px;letter-spacing:0.451px;color:#000;">Console</div>
<svg style="left:580.6px;top:430.6px" width="11" height="11" viewBox="0 0 11 11"><path d="M0.7 2.5 L2.5 0.7 L5.4 3.5 L8.3 0.7 L10.1 2.5 L7.2 5.3 L10.1 8.1 L8.3 9.9 L5.4 7.1 L2.5 9.9 L0.7 8.1 L3.6 5.3 Z" fill="#fdfdfd" stroke="#000" stroke-width="1.15" stroke-linejoin="round"/></svg>
<div class="tab" style="left:624.20px;top:428.93px;font-size:10.8px;letter-spacing:0.397px;color:#7a7a7a;">Progress</div>
<div class="tab" style="left:701.30px;top:428.93px;font-size:10.8px;letter-spacing:0.339px;color:#7a7a7a;">TestNG</div>
<div class="tab" style="left:770.00px;top:428.93px;font-size:10.8px;letter-spacing:0.506px;color:#7a7a7a;">Call Hierarchy</div>
<div class="tab" style="left:340.00px;top:451.77px;font-size:11.3px;letter-spacing:0.406px;color:#000;">No consoles to display at this time.</div>
<svg style="left:340px;top:429px;opacity:.55" width="15" height="16" viewBox="0 0 15 16"><path d="M4 1 H13 V13 H6" fill="#f4f6fa" stroke="#8fa0c0" stroke-width="0.9"/><circle cx="7.4" cy="4.6" r="2.2" fill="#e23b4c"/><rect x="0.8" y="7.4" width="6.4" height="6.8" fill="#e23b4c"/><path d="M2.4 9 L5.6 12.6 M5.6 9 L2.4 12.6" stroke="#fff" stroke-width="1.2"/><path d="M9.6 7 L12.4 13.4" stroke="#8fa0c0" stroke-width="0.9"/></svg>
<svg style="left:418px;top:429px;opacity:.55" width="16" height="16" viewBox="0 0 16 16"><path d="M2 1 H8 L10.6 3.6 V12 H2 Z" fill="#fdf6e4" stroke="#c9a050" stroke-width="0.9"/><path d="M6 4.4 Q4 4.4 4 6.4 Q4 8.4 6 8.4 M6 5.6 H7 M6 7.2 H7" stroke="#6a86c0" stroke-width="0.8" fill="none"/><path d="M7 9 H11 V6.8 L15 10.4 L11 14 V11.8 H7 Z" fill="#fbe3a0" stroke="#d39a36" stroke-width="0.9" stroke-linejoin="round"/></svg>
<svg style="left:511px;top:429px" width="15" height="14" viewBox="0 0 15 14"><rect x="1.2" y="1" width="12.4" height="9" rx="1.2" fill="#2f62c4" stroke="#1f3f94" stroke-width="0.9"/><rect x="2.8" y="2.6" width="9.2" height="5.8" fill="#dfe8fa"/><path d="M4 4.4 H10.6 M4 6.4 H8" stroke="#3c4f7c" stroke-width="0.9"/><path d="M5.6 10 H9.2 V11.6 H11.4 V13 H3.4 V11.6 H5.6 Z" fill="#2f62c4"/></svg>
<svg style="left:605px;top:431px;opacity:.55" width="15" height="13" viewBox="0 0 15 13"><rect x="0.6" y="0.8" width="11" height="3.6" fill="#c9e2c9" stroke="#5c9c5c" stroke-width="0.8"/><rect x="0.6" y="5.6" width="6.4" height="3.2" fill="#c9e2c9" stroke="#5c9c5c" stroke-width="0.8"/><circle cx="10.8" cy="8.6" r="3.4" fill="#f4fbf4" stroke="#3f9a4f" stroke-width="1.2"/><path d="M9.8 7 L12.4 8.6 L9.8 10.2 Z" fill="#3f9a4f"/></svg>
<svg style="left:680px;top:428px;opacity:.6" width="17" height="17" viewBox="0 0 17 17"><path d="M1 3.6 L8.5 1 L16 3.6 V13.6 L8.5 16 L1 13.6 Z" fill="#6c6058"/><path d="M8.5 4.6 L16 3.6 V13.6 L8.5 16 Z" fill="#f2c23a"/><path d="M1 3.6 L8.5 4.6 V16 L1 13.6 Z" fill="#e5633a"/><path d="M2.6 6.6 V12.4 M2.6 6.6 L6.6 13.4 V7.2" stroke="#fff" stroke-width="1.3" fill="none"/><path d="M14.4 6.8 H10.6 V13 H14.4 V10 H12.6" stroke="#fff" stroke-width="1.3" fill="none"/></svg>
<svg style="left:749px;top:429px;opacity:.6" width="17" height="16" viewBox="0 0 17 16"><path d="M0.6 2.6 H6 M0.6 13.2 H6 M3.4 2.6 V13.2 M3.4 8 H12" stroke="#8a968a" stroke-width="0.9" fill="none"/><circle cx="7.6" cy="2.6" r="2.1" fill="#79b58a"/><circle cx="13.6" cy="8" r="2.1" fill="#79b58a"/><circle cx="7.6" cy="13.2" r="2.1" fill="#79b58a"/></svg>
<div class="tab" style="left:2.80px;top:623.37px;font-size:11.3px;letter-spacing:0.443px;color:#000;">com.doctorq.Encrypt.java - EncryptApk/src/main/java</div>
<div class="abs" style="left:48.6px;top:645.6px;width:1120px;height:11.6px;background:#979797;border-top:1px solid #868686"></div>
<div class="abs" style="left:48.6px;top:657.2px;width:1120px;height:12.5px;background:#adadad"></div>
<div class="abs" style="left:48.6px;top:669.7px;width:1120px;height:14px;background:#cbcbcb"></div>
<svg style="left:0;top:636px" width="49" height="78" viewBox="0 0 49 78"><path d="M0 4 Q3 9.6 9 9.8 L48.6 9.8 L48.6 54 Q30 53.6 20 51.4 Q6 49.4 0 48.6 Z" fill="#cbcbcb"/><path d="M0 4 Q3 9.6 9 9.8 L48.6 9.8 L48.6 38.3 Q30 37.4 20 33.3 Q8 28 0 21.9 Z" fill="#adadad"/><path d="M0.6 5 Q3 9.6 9 9.8 L48.6 9.8 L48.6 24.6 Q30 22.6 20 16.4 Q12 11.6 8.4 9.8 Z" fill="#979797"/><path d="M8.6 10 H48.6" stroke="#868686" stroke-width="1"/><path d="M19.7 10 V78" stroke="#757575" stroke-width="1"/><path d="M48.6 10 V78" stroke="#a2a2a2" stroke-width="1"/><path d="M9.6 64.4 L11.5 69.2 L16.4 69.5 L12.6 72.7 L13.9 77.6 L9.6 74.9 L5.3 77.6 L6.6 72.7 L2.8 69.5 L7.7 69.2 Z" fill="#e0a23c" stroke="#d8963a" stroke-width="0.6" stroke-linejoin="round"/><path d="M15.2 53 V59.4" stroke="#111" stroke-width="1"/></svg>
<div class="abs" style="left:0;top:646px;width:19px;height:68px;overflow:hidden"><div class="abs" style="left:14.9px;top:49.8px;width:80px;height:12px;transform-origin:0 0;transform:rotate(-90deg)"><span style="position:absolute;left:0;top:-11px;white-space:nowrap;font-size:11.6px;line-height:12px;letter-spacing:0.25px">2: Favorites</span></div></div>
<div class="abs" style="left:930.2px;top:646px;width:1px;height:68px;background:#555"></div>
<div class="abs" style="left:763.2px;top:657.2px;width:1px;height:4px;background:#c4c4c4"></div>
<div class="abs" style="left:763.2px;top:669.8px;width:1px;height:5.4px;background:#dedede"></div>
<div class="abs" style="left:763.2px;top:683.8px;width:1px;height:10.6px;background:#d2d2d2"></div>
<svg style="left:1009px;top:625px" width="2" height="16" viewBox="0 0 2 16"><path d="M1 0 V16" stroke="#cfc8b8" stroke-width="1.2" stroke-dasharray="1.8 2.2"/></svg>
<div class="abs" style="left:0;top:0;width:1007.8px;height:21px;overflow:hidden"><svg style="left:8px;top:-1px;" width="18" height="17" viewBox="0 0 18 17"><rect x="1.2" y="1" width="12.6" height="14" rx="1" fill="#fdfdfd" stroke="#7d8fb0" stroke-width="0.9"/><rect x="1.2" y="1" width="12.6" height="3.4" fill="#4a7fd0"/><path d="M2 15 Q9 14 13.6 9" stroke="#e0b868" stroke-width="1" fill="none"/><g transform="translate(10.2 0.6)"><path d="M3.4 0 L4.5 2.3 L6.8 3.4 L4.5 4.5 L3.4 6.8 L2.3 4.5 L0 3.4 L2.3 2.3 Z" fill="#fff6dc" stroke="#d8951e" stroke-width="0.9" stroke-linejoin="round"/></g></svg>
<svg style="left:27.4px;top:6.4px" width="5" height="4" viewBox="0 0 5 4"><path d="M0 0.2 H5 L2.5 3.4 Z" fill="#000"/></svg>
<svg style="left:39px;top:-1px;" width="18" height="17" viewBox="0 0 18 17"><rect x="1.2" y="2" width="12.6" height="12.6" fill="#fdfdfd" stroke="#7d8fb0" stroke-width="0.9"/><rect x="1.2" y="2" width="12.6" height="2.6" fill="#6a98d8"/><path d="M4.6 4.6 V14.6" stroke="#9ab0d0" stroke-width="0.9"/><path d="M6 7.6 H12 M6 10.6 H11" stroke="#506a90" stroke-width="1.1"/><g transform="translate(10.4 0.4)"><path d="M3.4 0 L4.5 2.3 L6.8 3.4 L4.5 4.5 L3.4 6.8 L2.3 4.5 L0 3.4 L2.3 2.3 Z" fill="#fff6dc" stroke="#d8951e" stroke-width="0.9" stroke-linejoin="round"/></g></svg>
<svg style="left:57.9px;top:6.4px" width="5" height="4" viewBox="0 0 5 4"><path d="M0 0.2 H5 L2.5 3.4 Z" fill="#000"/></svg>
<svg style="left:70px;top:0px;" width="40" height="15" viewBox="0 0 40 15"><path d="M0.4 0 H37.4 V4.4 L36.6 13.4 H33 V11 H30.6 V13.4 H27.6 L27 10 H25 L24 4.6 H20.4 V4 H16.4 V4.6 H14.6 L14 13.6 H0.8 Z" fill="#cdcdcd"/><rect x="4.4" y="9.4" width="5" height="4" fill="#b0b0b0"/><rect x="5.6" y="10.4" width="2.6" height="3" fill="#cdcdcd"/></svg>
<svg style="left:111.5px;top:0" width="2" height="18" viewBox="0 0 2 18"><path d="M1 0 V18" stroke="#d8c8b0" stroke-width="1.2" stroke-dasharray="1.6 2.4"/></svg>
<div class="abs" style="left:116.4px;top:-2px;width:21.4px;height:19.6px;background:#b0b0b0;border:1px solid #9a9a9a;border-radius:1.5px"></div>
<svg style="left:119px;top:1px;" width="17" height="14" viewBox="0 0 17 14"><path d="M1 5 L4.4 1.6 L4.4 3.6 Q7.4 3.6 7.4 6.6 L5.4 6.6 Q5.4 5.4 4.4 5.4 L4.4 7.4 Z" fill="#e9e4d8"/><path d="M15.4 8.4 L12 5 L9 8.4 H11 Q11 11 9 12.4 Q13 12 13.4 8.4 Z" fill="#ece6d6"/></svg>
<svg style="left:140.6px;top:0px;" width="17" height="15" viewBox="0 0 17 15"><rect x="0.4" y="0.4" width="2.4" height="3.4" fill="#4f5a4f"/><rect x="3.8" y="0" width="9" height="4" fill="#10c82c"/><rect x="13.8" y="0.4" width="2.4" height="3.4" fill="#5a5f5a"/><rect x="0.4" y="5.6" width="2.2" height="3.4" fill="#4f5a4f"/><rect x="3.6" y="5.6" width="8" height="3.4" rx="1.4" fill="#5f645f"/><rect x="12.6" y="5.2" width="3.8" height="4" fill="#10c82c"/><rect x="0.4" y="10.8" width="1.6" height="3.4" fill="#4f5a4f"/><rect x="2.6" y="10.4" width="8.6" height="4" fill="#10c82c"/><rect x="12" y="10.8" width="4.4" height="3.2" rx="1.2" fill="#6a6f6a"/></svg>
<svg style="left:163.6px;top:-2px;" width="15" height="17" viewBox="0 0 15 17"><rect x="0.8" y="0.8" width="13.4" height="15.4" fill="#fdfdfd" stroke="#c9a878" stroke-width="1"/><circle cx="8.2" cy="5.2" r="1.2" fill="#3a68c0"/><path d="M8 7.4 L6.6 13.6" stroke="#3a68c0" stroke-width="1.9" stroke-linecap="round"/></svg>
<svg style="left:186.4px;top:-2px;" width="15" height="15.4" viewBox="0 0 15 15.4"><rect x="0.6" y="0.6" width="13.6" height="14" fill="#fbfbfb" stroke="#d8d8d8" stroke-width="0.9"/><path d="M2.6 4.4 H11.6 M5 6.8 H11.6 M2.6 9.2 H11.6 M5 11.6 H11.6" stroke="#3a3a3a" stroke-width="1"/></svg>
<svg style="left:207.6px;top:-3px;" width="18" height="18" viewBox="0 0 18 18"><circle cx="5.6" cy="6.4" r="4.9" fill="#2f9e3a" stroke="#1d6f28" stroke-width="0.8"/><path d="M3.885 3.705 L8.54 6.4 L3.885 9.095 Z" fill="#fff"/><path d="M8.6 6.6 H14 L16.4 9 V17 H8.6 Z" fill="#fdfdfd" stroke="#c09a5a" stroke-width="0.9"/><text x="9.6" y="15.6" font-family="Liberation Sans,sans-serif" font-weight="bold" font-size="8.6" fill="#2a62b8">S</text></svg>
<svg style="left:229.6px;top:-3px;" width="18" height="18" viewBox="0 0 18 18"><circle cx="5.6" cy="6.4" r="4.9" fill="#2f9e3a" stroke="#1d6f28" stroke-width="0.8"/><path d="M3.885 3.705 L8.54 6.4 L3.885 9.095 Z" fill="#fff"/><path d="M7.6 6.6 H13.6 L16.4 9 V17 H7.6 Z" fill="#fdfdfd" stroke="#c09a5a" stroke-width="0.9"/><text x="7.8" y="16" font-family="Liberation Sans,sans-serif" font-weight="bold" font-size="7.4" fill="#d0202c" letter-spacing="-0.4">EE</text></svg>
<svg style="left:250px;top:0" width="2" height="18" viewBox="0 0 2 18"><path d="M1 0 V18" stroke="#d8c8b0" stroke-width="1.2" stroke-dasharray="1.6 2.4"/></svg>
<svg style="left:259.6px;top:-2px;" width="15" height="16" viewBox="0 0 15 16"><rect x="1" y="0.6" width="12.6" height="10.6" rx="1.2" fill="#2f62c4" stroke="#2450a8" stroke-width="0.8"/><rect x="2.8" y="2.2" width="9" height="7" fill="#dbe6fa"/><path d="M4 4.6 H10.6 M4 6.8 H8" stroke="#3c4f7c" stroke-width="1"/><path d="M5.6 11.2 H9 V13 H11.6 V14.6 H3 V13 H5.6 Z" fill="#2f62c4"/></svg>
<svg style="left:278px;top:0" width="2" height="18" viewBox="0 0 2 18"><path d="M1 0 V18" stroke="#d8c8b0" stroke-width="1.2" stroke-dasharray="1.6 2.4"/></svg>
<svg style="left:286px;top:-1px;" width="15" height="15" viewBox="0 0 15 15"><circle cx="7.6" cy="8" r="3.8" fill="#dbe6fa" stroke="#3a62b8" stroke-width="1.5"/><circle cx="7.6" cy="8" r="1.6" fill="#7a9ad8"/><path d="M1.2 1.6 L13.4 13.6" stroke="#3458a8" stroke-width="1.1"/></svg>
<svg style="left:305.4px;top:0" width="2" height="18" viewBox="0 0 2 18"><path d="M1 0 V18" stroke="#d8c8b0" stroke-width="1.2" stroke-dasharray="1.6 2.4"/></svg>
<svg style="left:313.6px;top:-1px;" width="16" height="16" viewBox="0 0 16 16"><rect x="1" y="3" width="10.4" height="10.4" fill="#e8c89a" stroke="#c79a62" stroke-width="0.8"/><path d="M6.2 1.6 V14.6 M-0.2 8.2 H12.6" stroke="#8a4e22" stroke-width="1.2"/><g transform="translate(8.6 0)"><path d="M3.4 0 L4.5 2.3 L6.8 3.4 L4.5 4.5 L3.4 6.8 L2.3 4.5 L0 3.4 L2.3 2.3 Z" fill="#fff6dc" stroke="#d8951e" stroke-width="0.9" stroke-linejoin="round"/></g></svg>
<svg style="left:336px;top:-2px;" width="17" height="17" viewBox="0 0 17 17"><circle cx="7" cy="9.4" r="6.2" fill="#2f9e48" stroke="#1d7a30" stroke-width="0.9"/><text x="3" y="13.4" font-family="Liberation Sans,sans-serif" font-weight="bold" font-size="11" fill="#fff">C</text><g transform="translate(9.6 1.2)"><path d="M3.4 0 L4.5 2.3 L6.8 3.4 L4.5 4.5 L3.4 6.8 L2.3 4.5 L0 3.4 L2.3 2.3 Z" fill="#fff6dc" stroke="#d8951e" stroke-width="0.9" stroke-linejoin="round"/></g></svg>
<svg style="left:353.8px;top:6.4px" width="5" height="4" viewBox="0 0 5 4"><path d="M0 0.2 H5 L2.5 3.4 Z" fill="#000"/></svg>
<svg style="left:363px;top:0" width="2" height="18" viewBox="0 0 2 18"><path d="M1 0 V18" stroke="#d8c8b0" stroke-width="1.2" stroke-dasharray="1.6 2.4"/></svg>
<svg style="left:360px;top:0px;" width="120" height="16" viewBox="0 0 120 16"><path d="M11.4 4 H17 V5.6 H15.4 V8 H13 V5.6 H11.4 Z" fill="#cdcdcd"/><path d="M18.6 4 V2 L21.6 0 L24.6 2 V5 L21.6 7 L18.6 5 Z" fill="#cdcdcd"/><circle cx="21.6" cy="4.6" r="1" fill="#b0b0b0"/><path d="M42.6 4 H49.4 L43 13.4 L32 13.8 L32 13 L36.4 12.6 Z" fill="#cdcdcd"/><path d="M57 4 H61 V5 H57 Z M65.6 3.4 L67.4 4.6 L66.6 5.8 L64.8 4.6 Z M68 7 L70 8.4 L68.8 9.8 L67 8.6 Z" fill="#cdcdcd"/><rect x="58.8" y="7.4" width="5.4" height="5.2" rx="1.4" fill="#a9a4c8"/><path d="M58.8 9.6 H64.2" stroke="#d0cce4" stroke-width="0.9"/><path d="M60.4 13.4 H62.6" stroke="#8a86b8" stroke-width="0.8"/><path d="M78 4 H91.6 V13 L90.4 14.6 H79.2 L78 13 Z" fill="#cdcdcd"/><path d="M82.4 5 V10.6 H87.8 V5" stroke="#b0b0b0" stroke-width="0.9" fill="none"/><path d="M82.4 5 V6.2 M87.8 5 V6.2" stroke="#a8b4e0" stroke-width="0.9"/><path d="M101.2 4 H114.6 V13 L113.4 14.6 H102.4 L101.2 13 Z" fill="#cdcdcd"/><path d="M105.4 7.4 V12.4 M108 10 V12.4" stroke="#a8c4e4" stroke-width="1.1"/></svg>
<svg style="left:479px;top:0" width="2" height="18" viewBox="0 0 2 18"><path d="M1 0 V18" stroke="#d8c8b0" stroke-width="1.2" stroke-dasharray="1.6 2.4"/></svg>
<svg style="left:488px;top:-2px;" width="16" height="16" viewBox="0 0 16 16"><path d="M1.2 4 L4.6 6.4 M14.6 4 L11.2 6.4 M0.6 9 H4 M15.2 9 H11.8 M1.6 14 L4.8 11.6 M14.2 14 L11 11.6" stroke="#2c6a5a" stroke-width="1.1"/><ellipse cx="7.9" cy="9" rx="3.9" ry="5" fill="#4fae8a" stroke="#245a4c" stroke-width="1"/><circle cx="7.9" cy="3.4" r="2" fill="#2c6a5a"/><path d="M6 7.6 Q7.9 6.6 9.8 7.6 M7.9 7 V13.6" stroke="#c8f0d8" stroke-width="0.8" fill="none"/></svg>
<svg style="left:506.5px;top:6.4px" width="5" height="4" viewBox="0 0 5 4"><path d="M0 0.2 H5 L2.5 3.4 Z" fill="#000"/></svg>
<svg style="left:516.6px;top:-2px;" width="17" height="17" viewBox="0 0 17 17"><circle cx="8.2" cy="8.4" r="6.9" fill="#2f9e3a" stroke="#1d6f28" stroke-width="0.8"/><path d="M5.784999999999999 4.605 L12.34 8.4 L5.784999999999999 12.195 Z" fill="#fff"/></svg>
<svg style="left:536.9px;top:6.4px" width="5" height="4" viewBox="0 0 5 4"><path d="M0 0.2 H5 L2.5 3.4 Z" fill="#000"/></svg>
<svg style="left:546.6px;top:-3px;" width="19" height="18" viewBox="0 0 19 18"><circle cx="6.2" cy="6.6" r="5.2" fill="#2f9e3a" stroke="#1d6f28" stroke-width="0.8"/><path d="M4.380000000000001 3.7399999999999993 L9.32 6.6 L4.380000000000001 9.46 Z" fill="#fff"/><rect x="8" y="11.4" width="10" height="5.6" rx="0.8" fill="#d82838" stroke="#a81824" stroke-width="0.6"/><path d="M10.6 11.4 V9.6 H15.4 V11.4" stroke="#d82838" stroke-width="1.2" fill="none"/><rect x="12" y="12.8" width="2" height="1.6" fill="#f8c0c0"/></svg>
<svg style="left:567.7px;top:6.4px" width="5" height="4" viewBox="0 0 5 4"><path d="M0 0.2 H5 L2.5 3.4 Z" fill="#000"/></svg>
<div class="abs" style="left:578px;top:14px;width:1px;height:5px;background:#8c8c8c"></div>
<svg style="left:583px;top:-3px;" width="18" height="18" viewBox="0 0 18 18"><circle cx="6" cy="6.8" r="5.2" fill="#5f9a62" stroke="#4a7a50" stroke-width="0.8"/><path d="M4.4 4 L8.8 6.8 L4.4 9.6 Z" fill="#e8f0e4"/><path d="M9 9.6 Q13 9 13.6 12.6 M11.4 15.4 L13.8 13 L16 15.4" stroke="#c8b888" stroke-width="1.6" fill="none"/><path d="M10.8 11.2 L12.8 16.4 L14.8 11.2 Z" fill="#4a5a4a"/></svg>
<svg style="left:605px;top:6.4px" width="5" height="4" viewBox="0 0 5 4"><path d="M0 0.2 H5 L2.5 3.4 Z" fill="#000"/></svg>
<svg style="left:613.5px;top:0" width="2" height="18" viewBox="0 0 2 18"><path d="M1 0 V18" stroke="#d8c8b0" stroke-width="1.2" stroke-dasharray="1.6 2.4"/></svg>
<svg style="left:620.6px;top:-2px;" width="18" height="16" viewBox="0 0 18 16"><path d="M1 14.6 V4.6 H5.6 L7 6 H13.6 V8" fill="#fbe9bd" stroke="#d9952c" stroke-width="1"/><path d="M1 14.6 L4 8 H16.6 L13.6 14.6 Z" fill="#fbdc98" stroke="#d9952c" stroke-width="1" stroke-linejoin="round"/><circle cx="8" cy="4.4" r="3" fill="#6a58b8" stroke="#4a3a90" stroke-width="0.6"/><circle cx="12.8" cy="6" r="2.6" fill="#3a9a5a" stroke="#2a7040" stroke-width="0.6"/></svg>
<svg style="left:642px;top:-2px;" width="18" height="16" viewBox="0 0 18 16"><path d="M1 14.6 V4.6 H5.6 L7 6 H13.6 V8" fill="#fbe9bd" stroke="#d9952c" stroke-width="1"/><rect x="7.6" y="1.2" width="6.4" height="6" fill="#f4f6fb" stroke="#7f8fb8" stroke-width="0.8"/><rect x="7.6" y="1.2" width="6.4" height="1.8" fill="#8a9ad0"/><path d="M1 14.6 L4 8 H16.6 L13.6 14.6 Z" fill="#fbdc98" stroke="#d9952c" stroke-width="1" stroke-linejoin="round"/></svg>
<svg style="left:664.6px;top:-2px;" width="18" height="17" viewBox="0 0 18 17"><path d="M9.6 3.6 L13.6 0.6 L16.6 3.4 L13.2 7 Z" fill="#f8d27a" stroke="#c8902a" stroke-width="0.9"/><path d="M9.6 3.6 L13.2 7 L7.4 12.6 L4 9.4 Z" fill="#fbe6b0" stroke="#c8902a" stroke-width="0.9"/><path d="M4 9.4 L7.4 12.6 L4.2 15 L1 15.4 L1.6 12 Z" fill="#8a8a8a" stroke="#5a5a5a" stroke-width="0.7"/><circle cx="14" cy="2.8" r="0.9" fill="#fff"/></svg>
<svg style="left:684.2px;top:6.4px" width="5" height="4" viewBox="0 0 5 4"><path d="M0 0.2 H5 L2.5 3.4 Z" fill="#000"/></svg>
<svg style="left:693px;top:0" width="2" height="18" viewBox="0 0 2 18"><path d="M1 0 V18" stroke="#d8c8b0" stroke-width="1.2" stroke-dasharray="1.6 2.4"/></svg>
<svg style="left:700px;top:0px;" width="17" height="16" viewBox="0 0 17 16"><path d="M1 4 H15.4 V10.6 L12 11 V14.4 H3.4 L2.6 11 L1 8 Z" fill="#cdcdcd"/><path d="M7 3 L8 8 L4.6 11.6" stroke="#d8ceb8" stroke-width="0.9" fill="none"/></svg>
<svg style="left:720px;top:6.4px" width="5" height="4" viewBox="0 0 5 4"><path d="M0 0.2 H5 L2.5 3.4 Z" fill="#000"/></svg>
<svg style="left:730px;top:0px;" width="12" height="16" viewBox="0 0 12 16"><path d="M1 4 L5.4 1.6 L10 4 V8.6 H8.2 V13 L6 14.4 L3.6 13 V8.6 H1 Z" fill="#cdcdcd"/></svg>
<svg style="left:750.5px;top:6.4px" width="5" height="4" viewBox="0 0 5 4"><path d="M0 0.2 H5 L2.5 3.4 Z" fill="#000"/></svg>
<svg style="left:762px;top:0px;" width="17" height="14" viewBox="0 0 17 14"><path d="M0.6 4 H15.6 V9.8 H8.6 L7 12.6 L5 9.4 L1.6 6 Z" fill="#cdcdcd"/><circle cx="3.4" cy="3.2" r="1.3" fill="#b4bcd8"/></svg>
<svg style="left:784.4px;top:-2px;" width="16" height="16" viewBox="0 0 16 16"><path d="M1 8 L7.6 1.6 V5 H14.6 V11 H7.6 V14.4 Z" fill="#fdf0cc" stroke="#d48a1a" stroke-width="1.2" stroke-linejoin="round"/><path d="M3.2 8 L7 4.4 V6.2 H13.4" stroke="#fdf2c8" stroke-width="1" fill="none"/></svg>
<svg style="left:802.7px;top:6.4px" width="5" height="4" viewBox="0 0 5 4"><path d="M0 0.2 H5 L2.5 3.4 Z" fill="#000"/></svg>
<svg style="left:815px;top:0px;" width="15" height="13" viewBox="0 0 15 13"><path d="M1 4 H8 V2.4 H10 V4 L13.6 7 L9.6 11 L8.4 9.6 H1 Z" fill="#cdcdcd"/></svg>
<svg style="left:833px;top:6.4px" width="5" height="4" viewBox="0 0 5 4"><path d="M0 0.2 H5 L2.5 3.4 Z" fill="#7c7c7c"/></svg>
<div class="abs" style="left:905.3px;top:-3px;width:97px;height:17.6px;background:#fcfcfc;border-radius:3px;box-shadow:0 0 0 0.6px #c4c4c4"></div></div>
<div class="tab" style="left:916.00px;top:-1.10px;font-size:11.2px;letter-spacing:0.489px;color:#bdbdbd;">Quick Access</div>
<svg style="left:1008px;top:0" width="9" height="23" viewBox="0 0 9 23"><path d="M2.2 2 V19" stroke="#d8cdb8" stroke-width="1.4" stroke-dasharray="3.2 3.3"/><path d="M5 0 H8 V21.4 Q8 22.8 6.4 22.8 L5 22.8 Z" fill="#4a4a4a"/><path d="M5 0 H6.9 V21.6 H5 Z" fill="#b0b0b0"/><path d="M5 0 H6.9 V4 H5 Z" fill="#cdcdcd"/></svg>
<svg style="left:1024.6px;top:0px;" width="15" height="16" viewBox="0 0 15 16"><rect x="0.9" y="3.4" width="12.2" height="11" rx="1.2" fill="#e6effa" stroke="#a0865a" stroke-width="1.1"/><path d="M1.4 5.2 H12.6" stroke="#5a92e2" stroke-width="2.2"/><path d="M0.9 10.4 H13.1 M4.9 6.4 V14.4" stroke="#8a7448" stroke-width="1"/><g transform="translate(7.4 0.6)"><path d="M3.6 0 L4.8 2.4 L7.2 3.6 L4.8 4.8 L3.6 7.2 L2.4 4.8 L0 3.6 L2.4 2.4 Z" fill="#fffaf0" stroke="#d8951e" stroke-width="1" stroke-linejoin="round"/></g></svg>
<div class="abs" style="left:1045.8px;top:0px;width:1.2px;height:18.6px;background:#d2d2d2"></div>
<svg style="left:1053.2px;top:0px;" width="16" height="16" viewBox="0 0 16 16"><path d="M3.6 6.6 V12.6 H9" stroke="#6a5a3a" stroke-width="1" fill="none"/><rect x="0.8" y="5" width="5.2" height="4.4" fill="#f6d27a" stroke="#b88a2a" stroke-width="0.8"/><rect x="8.6" y="10.2" width="5.2" height="4.4" fill="#f6d27a" stroke="#b88a2a" stroke-width="0.8"/><ellipse cx="10" cy="4.2" rx="4.4" ry="3.4" transform="rotate(35 10 4.2)" fill="#a8682e" stroke="#7a4a1e" stroke-width="0.7"/><path d="M7.4 2.4 Q10.4 3.6 12.6 6.2" stroke="#d8b08a" stroke-width="0.8" fill="none"/></svg>
<div class="tab" style="left:1071.00px;top:0.26px;font-size:11px;letter-spacing:0.272px;color:#3c3c3c;">Java EE</div>
<svg style="left:1123.6px;top:-1px;" width="16" height="16" viewBox="0 0 16 16"><path d="M1.2 4 L4.6 6.4 M14.6 4 L11.2 6.4 M0.6 9 H4 M15.2 9 H11.8 M1.6 14 L4.8 11.6 M14.2 14 L11 11.6" stroke="#2c6a5a" stroke-width="1.1"/><ellipse cx="7.9" cy="9" rx="3.9" ry="5" fill="#4fae8a" stroke="#245a4c" stroke-width="1"/><circle cx="7.9" cy="3.4" r="2" fill="#2c6a5a"/><path d="M6 7.6 Q7.9 6.6 9.8 7.6 M7.9 7 V13.6" stroke="#c8f0d8" stroke-width="0.8" fill="none"/></svg>
<div class="tab" style="left:1141.00px;top:0.26px;font-size:11px;letter-spacing:0.746px;color:#3c3c3c;">Debug</div>
</body></html>
